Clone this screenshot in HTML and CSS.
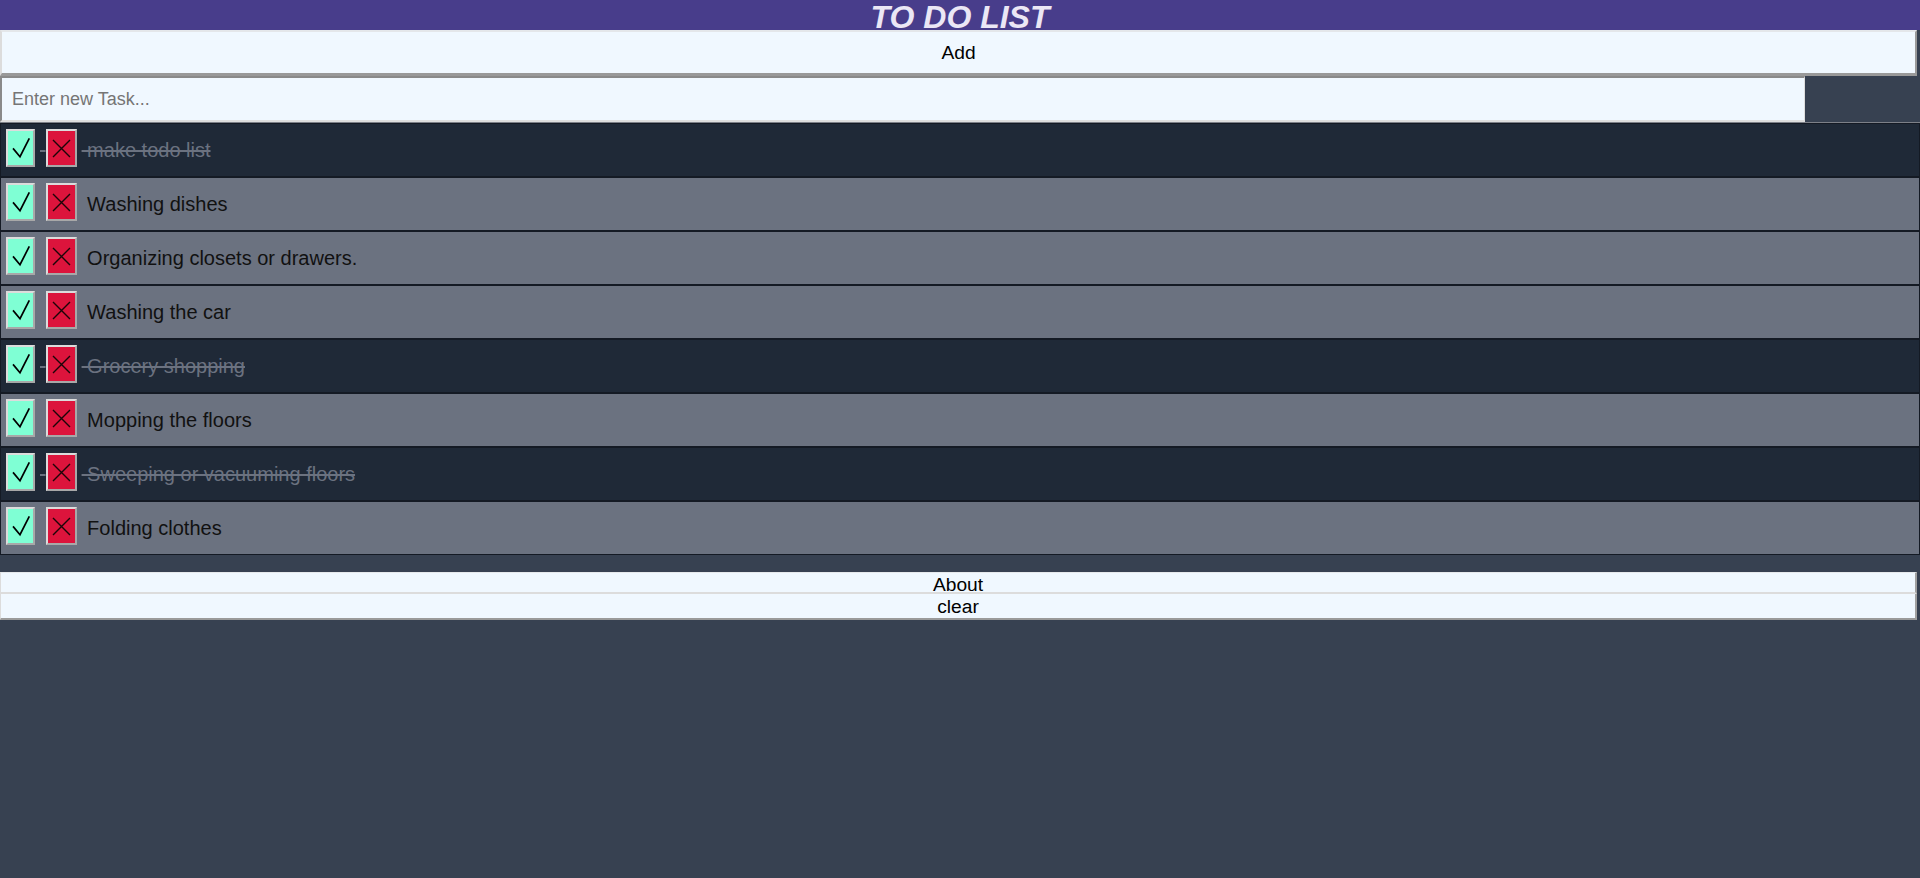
FILE: index.html
```html
<!DOCTYPE html>
<html lang="en">
<head>
<meta charset="utf-8">
<title>TO DO LIST</title>
<link rel="stylesheet" href="styles.css">
</head>
<body>
<header class="top">
  <h1 class="title">TO DO LIST</h1>
</header>
<button class="add-btn">Add</button>
<div class="entry">
  <input class="task-input" type="text" placeholder="Enter new Task...">
</div>
<ul class="task-list">
  <li class="task done"><button class="btn-ok"><svg class="ico" width="25" height="34" viewBox="0 0 25 34"><path d="M5 17.4 L12 25.7 L21.3 7.4" fill="none" stroke="#000" stroke-width="1.7"/></svg></button> <button class="btn-del"><svg class="ico" width="27" height="34" viewBox="0 0 27 34"><path d="M5 9 L22 26 M22 9 L5 26" fill="none" stroke="#1a0508" stroke-width="1.4"/></svg></button> make todo list</li>
  <li class="task"><button class="btn-ok"><svg class="ico" width="25" height="34" viewBox="0 0 25 34"><path d="M5 17.4 L12 25.7 L21.3 7.4" fill="none" stroke="#000" stroke-width="1.7"/></svg></button> <button class="btn-del"><svg class="ico" width="27" height="34" viewBox="0 0 27 34"><path d="M5 9 L22 26 M22 9 L5 26" fill="none" stroke="#1a0508" stroke-width="1.4"/></svg></button> Washing dishes</li>
  <li class="task"><button class="btn-ok"><svg class="ico" width="25" height="34" viewBox="0 0 25 34"><path d="M5 17.4 L12 25.7 L21.3 7.4" fill="none" stroke="#000" stroke-width="1.7"/></svg></button> <button class="btn-del"><svg class="ico" width="27" height="34" viewBox="0 0 27 34"><path d="M5 9 L22 26 M22 9 L5 26" fill="none" stroke="#1a0508" stroke-width="1.4"/></svg></button> Organizing closets or drawers.</li>
  <li class="task"><button class="btn-ok"><svg class="ico" width="25" height="34" viewBox="0 0 25 34"><path d="M5 17.4 L12 25.7 L21.3 7.4" fill="none" stroke="#000" stroke-width="1.7"/></svg></button> <button class="btn-del"><svg class="ico" width="27" height="34" viewBox="0 0 27 34"><path d="M5 9 L22 26 M22 9 L5 26" fill="none" stroke="#1a0508" stroke-width="1.4"/></svg></button> Washing the car</li>
  <li class="task done"><button class="btn-ok"><svg class="ico" width="25" height="34" viewBox="0 0 25 34"><path d="M5 17.4 L12 25.7 L21.3 7.4" fill="none" stroke="#000" stroke-width="1.7"/></svg></button> <button class="btn-del"><svg class="ico" width="27" height="34" viewBox="0 0 27 34"><path d="M5 9 L22 26 M22 9 L5 26" fill="none" stroke="#1a0508" stroke-width="1.4"/></svg></button> Grocery shopping</li>
  <li class="task"><button class="btn-ok"><svg class="ico" width="25" height="34" viewBox="0 0 25 34"><path d="M5 17.4 L12 25.7 L21.3 7.4" fill="none" stroke="#000" stroke-width="1.7"/></svg></button> <button class="btn-del"><svg class="ico" width="27" height="34" viewBox="0 0 27 34"><path d="M5 9 L22 26 M22 9 L5 26" fill="none" stroke="#1a0508" stroke-width="1.4"/></svg></button> Mopping the floors</li>
  <li class="task done"><button class="btn-ok"><svg class="ico" width="25" height="34" viewBox="0 0 25 34"><path d="M5 17.4 L12 25.7 L21.3 7.4" fill="none" stroke="#000" stroke-width="1.7"/></svg></button> <button class="btn-del"><svg class="ico" width="27" height="34" viewBox="0 0 27 34"><path d="M5 9 L22 26 M22 9 L5 26" fill="none" stroke="#1a0508" stroke-width="1.4"/></svg></button> Sweeping or vacuuming floors</li>
  <li class="task"><button class="btn-ok"><svg class="ico" width="25" height="34" viewBox="0 0 25 34"><path d="M5 17.4 L12 25.7 L21.3 7.4" fill="none" stroke="#000" stroke-width="1.7"/></svg></button> <button class="btn-del"><svg class="ico" width="27" height="34" viewBox="0 0 27 34"><path d="M5 9 L22 26 M22 9 L5 26" fill="none" stroke="#1a0508" stroke-width="1.4"/></svg></button> Folding clothes</li>
</ul>
<button class="about-btn">About</button>
<button class="clear-btn">clear</button>
</body>
</html>
```

FILE: styles.css
```css
* { box-sizing: border-box; }

html, body {
  margin: 0;
  padding: 0;
}

body {
  background: #374151;
  font-family: "Liberation Sans", Arial, sans-serif;
  min-height: 878px;
}

.top {
  background: #483d8b;
  height: 30px;
  overflow: hidden;
}

.title {
  margin: 0;
  text-align: center;
  font-size: 32px;
  font-weight: bold;
  font-style: italic;
  line-height: 34px;
  color: #ebe7f5;
}

.add-btn {
  display: block;
  width: calc(100% - 3px);
  height: 46px;
  margin: 0;
  padding: 0;
  background: #f0f8ff;
  color: #000;
  font-family: "Liberation Sans", Arial, sans-serif;
  font-size: 19.2px;
  border-style: solid;
  border-width: 2px 2px 3px 2px;
  border-color: #e4e7ea #9a9a9a #999 #dcdcdc;
}

.entry {
  height: 47px;
  border-bottom: 1px solid #7d8088;
}

.task-input {
  display: block;
  width: 94%;
  height: 46px;
  margin: 0;
  padding: 0 10px;
  background: #f0f8ff;
  font-family: "Liberation Sans", Arial, sans-serif;
  font-size: 18px;
  color: #000;
  border-style: solid;
  border-width: 2px 1px 2px 2px;
  border-color: #8a8a8a #dedede #dedede #8a8a8a;
  outline: none;
}

.task-input::placeholder {
  color: #757575;
}

.task-list {
  list-style: none;
  margin: 0 0 17px 0;
  padding: 0;
}

.task {
  box-sizing: content-box;
  height: 52px;
  line-height: 52px;
  padding: 0 0 0 5px;
  border: 1px solid #141a24;
  background: #6b7280;
  color: #111;
  font-size: 20px;
  white-space: nowrap;
}

.task.done {
  background: #1f2937;
  color: #6b7280;
  text-decoration: line-through;
}

.btn-ok,
.btn-del {
  display: inline-flex;
  align-items: center;
  justify-content: center;
  vertical-align: top;
  height: 38px;
  margin: 5px 5px 0 0;
  padding: 0;
  border-style: solid;
  border-width: 2px;
  border-color: #dcdcdc #a8a8a8 #a8a8a8 #dcdcdc;
}

.btn-ok {
  width: 29px;
  background: #7fffd4;
}

.btn-del {
  width: 31px;
  background: #dc143c;
}

.ico {
  display: block;
  flex: none;
}

.about-btn,
.clear-btn {
  display: block;
  width: calc(100% - 3px);
  margin: 0;
  padding: 0;
  background: #f0f8ff;
  color: #000;
  font-family: "Liberation Sans", Arial, sans-serif;
  font-size: 19.2px;
  border-style: solid;
}

.about-btn {
  height: 22px;
  line-height: 19px;
  padding-top: 2px;
  border-width: 1px 2px 2px 1px;
  border-color: #e6e9ec #a0a0a0 #dcdcdc #dcdcdc;
}

.clear-btn {
  height: 26px;
  line-height: 22px;
  padding-top: 1px;
  border-width: 0 2px 2px 1px;
  border-color: #dcdcdc #a0a0a0 #9a9a9a #dcdcdc;
}
```
